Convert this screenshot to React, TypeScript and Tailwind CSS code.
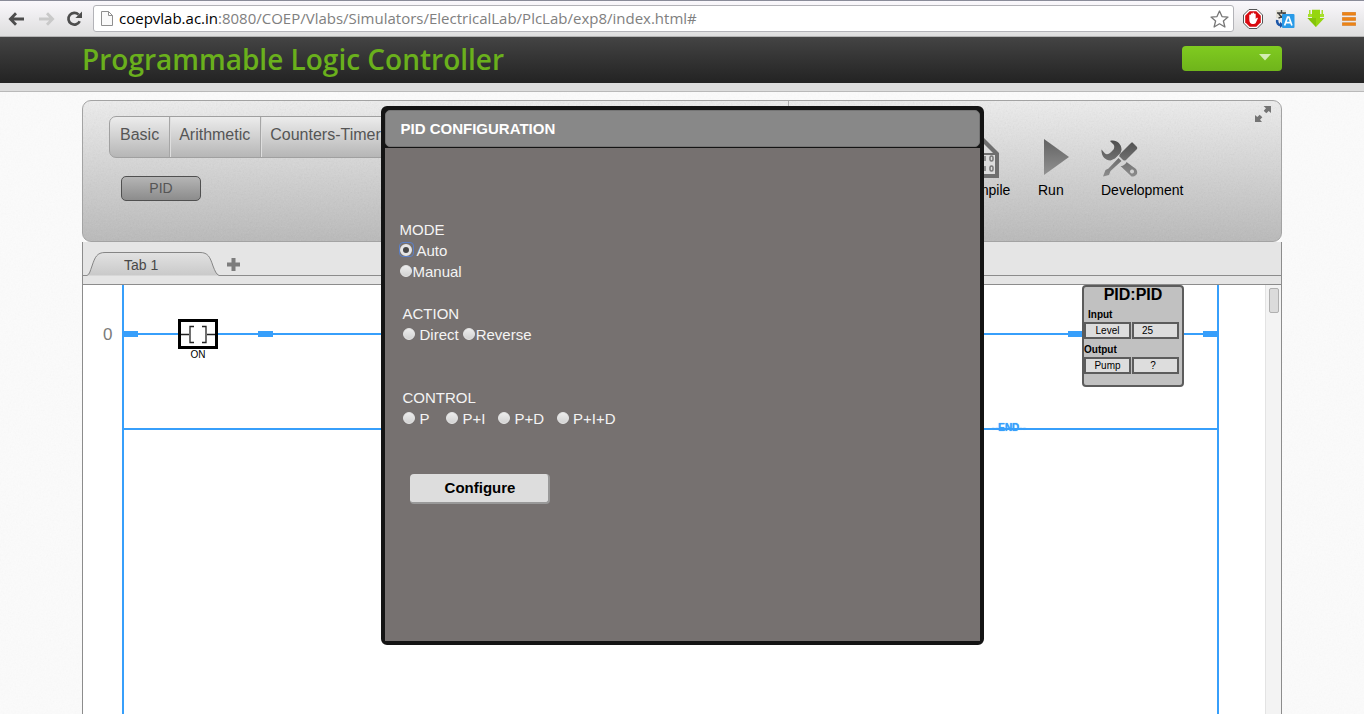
import { useState, type ReactNode } from "react";

function Grain({ id, className }: { id: string; className: string }) {
  return (
    <svg aria-hidden="true" className={`pointer-events-none absolute inset-0 size-full ${className}`}>
      <filter id={id}>
        <feTurbulence type="fractalNoise" baseFrequency="0.6" numOctaves="2" stitchTiles="stitch" />
        <feColorMatrix type="saturate" values="0" />
      </filter>
      <rect width="100%" height="100%" filter={`url(#${id})`} />
    </svg>
  );
}

function BrowserBar() {
  return (
    <div className="flex h-[37px] shrink-0 items-center border-t border-t-[#8a8c99] border-b border-b-[#b4b4b4] bg-linear-to-b from-[#faf8fc] to-[#dedede]">
      <button aria-label="Back" className="ml-2 flex w-[30px] items-center">
        <svg width="17" height="14" viewBox="0 0 17 14" fill="none" stroke="#4d4d4d" strokeWidth="2.8">
          <path d="M8 1.2 2.4 7 8 12.8M2.6 7H16" />
        </svg>
      </button>
      <button aria-label="Forward" className="flex w-[28px] items-center">
        <svg width="17" height="14" viewBox="0 0 17 14" fill="none" stroke="#c9c9c9" strokeWidth="2.8">
          <path d="M9 1.2 14.6 7 9 12.8M14.4 7H1" />
        </svg>
      </button>
      <button aria-label="Reload" className="flex w-[27px] items-center">
        <svg width="17" height="16" viewBox="0 0 17 16">
          <path d="M12.6 3.6A5.9 5.9 0 1 0 13.7 10.2" fill="none" stroke="#4d4d4d" strokeWidth="2.7" />
          <path d="M16 .4V7H9.4Z" fill="#4d4d4d" />
        </svg>
      </button>
      <div className="flex h-[27px] min-w-0 flex-1 items-center rounded-[3px] border border-[#b3b3b8] bg-white pr-1 pl-[7px]">
        <svg width="12" height="15" viewBox="0 0 12 15" fill="#fafafa" stroke="#8f8f8f">
          <path d="M.5.5H7.5L11.5 4.5V14.5H.5ZM7.5.5V4.5H11.5" />
        </svg>
        <p className="ml-[6px] min-w-0 flex-1 truncate pb-[2px] font-['Open_Sans',sans-serif] text-[15px] leading-[22px] text-[#808080]">
          <span className="text-black">coepvlab.ac.in</span>:8080/COEP/Vlabs/Simulators/ElectricalLab/PlcLab/exp8/index.html#
        </p>
        <button aria-label="Bookmark">
          <svg width="19" height="18" viewBox="0 0 19 18" fill="#fff" stroke="#777" strokeWidth="1.3" strokeLinejoin="round">
            <path d="M9.5 1 12 6.6 18 7.1 13.4 11 14.9 17 9.5 13.8 4.1 17 5.6 11 1 7.1 7 6.6Z" />
          </svg>
        </button>
      </div>
      <div className="mr-2 ml-[9px] flex items-center">
        <svg width="20" height="20" viewBox="0 0 20 20">
          <path d="M6 .5H14L19.5 6V14L14 19.5H6L.5 14V6Z" fill="#fff" stroke="#555" />
          <path d="M6.7 2.2H13.3L17.8 6.7V13.3L13.3 17.8H6.7L2.2 13.3V6.7Z" fill="#d9090f" />
          <path d="M6.3 9.5V6.2a.8.8 0 0 1 1.6 0V5a.8.8 0 0 1 1.6 0V4.4a.8.8 0 0 1 1.6 0V5.2a.8.8 0 0 1 1.6 0V10l1.1-1.2c.8-.4 1.3.3.9 1L12.7 14c-.8 1.3-4.6 1.6-5.6-.2-.7-1.2-.8-2.6-.8-4.3Z" fill="#fff" />
        </svg>
        <svg className="ml-3" width="20" height="20" viewBox="0 0 20 20">
          <path d="M1 1H11V9H1Z" fill="#e3e0d6" />
          <path d="M2 4H11M6.5 1V4M3.5 9C6 8.5 8.5 6.5 9.3 4M3.6 4.5C5 7 7 8.5 9.5 9" fill="none" stroke="#3d3d3d" strokeWidth="1.4" />
          <path d="M2.2 11C1.6 14 3.4 16.2 6 16.2" fill="none" stroke="#1c56a8" strokeWidth="2.6" />
          <path d="M5 12.8 8.5 16 5 19Z" fill="#1c56a8" />
          <rect x="7" y="5" width="12.5" height="14" rx="1" fill="#2a9be8" />
          <path d="M9.6 16.5 12.6 8H13.9L16.9 16.5M10.8 13.6H15.8" fill="none" stroke="#fff" strokeWidth="1.7" />
        </svg>
        <svg className="ml-3" width="18" height="19" viewBox="0 0 18 19">
          <path d="M5 .8H13V9H17.5L9 18 .5 9H5Z" fill="#96d60f" />
          <path d="M2 1H3.5V5H5V8H1V5H2ZM14.500 1H16V5H17V8H13V5H14.5Z" fill="#a7df2c" />
          <path d="M9 18 .5 9H9Z" fill="#84c40a" />
        </svg>
        <button aria-label="Browser menu" className="ml-[17px]">
          <svg width="14" height="14" viewBox="0 0 14 14" fill="#ee8416" stroke="#cf6a0c" strokeWidth=".5">
            <path d="M.3.3H13.7V3.2H.3ZM.3 5.500H13.7V8.4H.3ZM.3 10.700H13.7V13.6H.3Z" />
          </svg>
        </button>
      </div>
    </div>
  );
}

function SiteHeader() {
  return (
    <header className="shrink-0 border-b border-[#b9b9b9] bg-[#ddd]">
      <div className="h-[46px] bg-linear-to-b from-[#444] to-[#232323]">
        <div className="mx-auto flex w-full max-w-[1200px] justify-between">
          <h1 className="h-[46px] font-['Open_Sans',sans-serif] text-[28px] leading-[44px] font-semibold whitespace-nowrap text-[#6ab01c]">
            Programmable Logic Controller
          </h1>
          <button
            aria-label="Account menu"
            className="mt-[9px] flex h-[25px] w-[100px] justify-end rounded-[4px] bg-linear-to-b from-[#80cb20] to-[#6fb41b] pt-2 pr-[11px]"
          >
            <svg width="12" height="7" viewBox="0 0 12 7" fill="#d3edb2">
              <path d="M0 0H12L6 6.5Z" />
            </svg>
          </button>
        </div>
      </div>
      <div className="h-2" />
    </header>
  );
}

function ToolItem({ label, children }: { label: string; children: ReactNode }) {
  return (
    <button className="flex flex-col items-start text-[14px] leading-5 text-black">
      <span className="flex h-11 items-center pb-[2px]">{children}</span>
      {label}
    </button>
  );
}

function Ribbon() {
  return (
    <section className="relative flex h-[142px] shrink-0 overflow-hidden rounded-[9px] border border-[#a3a3a3] bg-linear-to-b from-[#eee] to-[#bababa]">
      <Grain id="ribbon-grain" className="opacity-15" />
      <div className="relative w-[705px] shrink-0 pt-[15px] pl-[26px]">
        <nav className="flex h-[42px] w-fit rounded-[7px] border border-[#a0a0a0] bg-linear-to-b from-[#ececec] to-[#b6b6b6] text-[16px] leading-[35px] text-[#555]">
          <a href="#basic" className="border-r border-[#a6a6a6] px-[10px]">Basic</a>
          <a href="#arithmetic" className="border-r border-l border-r-[#a6a6a6] border-l-[#dedede] pr-[10px] pl-2">Arithmetic</a>
          <a href="#counters" className="border-l border-[#dedede] px-2">Counters-Timers</a>
        </nav>
        <button className="mt-[18px] ml-3 h-[25px] w-20 rounded-[5px] border border-[#505050] bg-linear-to-b from-[#b5b5b5] to-[#8c8c8c] text-[14px] leading-[23px] text-[#555]">
          PID
        </button>
      </div>
      <div className="relative grid flex-1 grid-cols-[79px_63px_auto] content-start justify-start border-l border-[#adadad] pt-[35px] pl-[170px]">
        <ToolItem label="Compile">
          <svg className="ml-[2px]" width="38" height="42" viewBox="0 0 38 42">
            <path d="M0 1H22L38 17V42H0Z" fill="#6f6f6f" />
            <path d="M4 5H20L32 17H4Z" fill="#ddd" />
            <path d="M4 19H34V38H4Z" fill="#ddd" />
            <g fill="none" stroke="#777" strokeWidth="1.5">
              <rect x="29" y="20" width="3" height="5" rx="1.5" />
              <rect x="29" y="30" width="3" height="5" rx="1.5" />
              <path d="M24 20V25M24 30V35" />
            </g>
          </svg>
        </ToolItem>
        <ToolItem label="Run">
          <svg className="ml-[6px]" width="25" height="38" viewBox="0 0 25 38">
            <defs>
              <linearGradient id="run-fill" x2="0" y2="1">
                <stop stopColor="#626262" />
                <stop offset="1" stopColor="#929292" />
              </linearGradient>
            </defs>
            <path d="M0 1 25 19 0 37Z" fill="url(#run-fill)" />
          </svg>
        </ToolItem>
        <ToolItem label="Development">
          <svg className="mt-[3px]" width="37" height="37" viewBox="0 0 37 37">
            <defs>
              <linearGradient id="tool-fill" x2="0" y2="37" gradientUnits="userSpaceOnUse">
                <stop stopColor="#4e4e4e" />
                <stop offset="1" stopColor="#8d8d8d" />
              </linearGradient>
            </defs>
            <g fill="url(#tool-fill)">
              <path d="M9 1C15-1 21 4 20.5 10L19.5 13 14 18.5 9.5 20.5C4 20.5 0 16 .5 9.5L4 13.500C5 14.5 7 14.5 9 13L12.5 9.500C13.5 7.500 13.5 5.500 12.5 4.500Z" />
              <path d="M31.500 2.500 36 7Q36.5 8 36 9L25 20Q23.500 21 22 20L18.500 16.500Q18 15 19 14L30 3Q31 2 31.500 2.500Z" />
              <path d="M17.500 18 20.500 21 9.500 31 8 35 2 36.500 4.500 30 7.500 28.500Z" />
              <path fillRule="evenodd" d="M25.500 22 35 29C38 33 35 37 30.500 36.500L19.500 26C21.500 26.500 25 24 25.500 22ZM31 29.500a2 2 0 1 0 .1 0Z" />
            </g>
          </svg>
        </ToolItem>
      </div>
      <button aria-label="Toggle full screen" className="absolute top-[5px] right-[10px]">
        <svg width="16" height="16" viewBox="0 0 16 16" fill="#747474">
          <path d="M8.5 0H16V7L13.700 5 11.300 7.300 8.700 4.700 11 2.300ZM0 9 2.300 11 4.700 8.700 7.300 11.300 5 13.700 7 16H0Z" />
        </svg>
      </button>
    </section>
  );
}

function TabStrip() {
  return (
    <div className="shrink-0 border-x border-[#8c8c8c] bg-[#e5e5e5]">
      <div className="flex h-[34px] items-end">
        <div className="h-px w-[4px] bg-[#8c8c8c]" />
        <button className="relative h-6 w-[132px]">
          <svg className="absolute inset-0" width="132" height="24" viewBox="0 0 132 24">
            <defs>
              <linearGradient id="tab-fill" x2="0" y2="1">
                <stop stopColor="#e2e2e2" />
                <stop offset="1" stopColor="#c9c9c9" />
              </linearGradient>
            </defs>
            <path
              d="M0 23.500C3 22 3 19 5 14C8 5 10 .5 18 .5H113C121 .5 123 5 126 14C128 19 129 22 132 23.500"
              fill="url(#tab-fill)"
              stroke="#858585"
            />
          </svg>
          <span className="absolute top-[4px] left-[37px] text-[14px] leading-[18px] text-[#484848]">Tab 1</span>
        </button>
        <div className="flex h-full flex-1 items-end border-b border-[#8c8c8c] pb-[4px] pl-[8px]">
          <button aria-label="Add tab">
            <svg width="13" height="13" viewBox="0 0 13 13" fill="#7d7d7d">
              <path d="M4.500 0H8.500V4.500H13V8.500H8.500V13H4.500V8.500H0V4.500H4.500Z" />
            </svg>
          </button>
        </div>
      </div>
      <div className="h-[9px] border-b border-[#8c8c8c]" />
    </div>
  );
}

function Cell({ children }: { children: ReactNode }) {
  return (
    <span className="h-[17px] border-2 border-[#5c5c5c] bg-[#ddd] text-center text-[10px] leading-[13px]">
      {children}
    </span>
  );
}

function LadderCanvas() {
  return (
    <main className="relative min-h-0 flex-1 overflow-hidden border-x border-[#8c8c8c] bg-white">
      <div className="absolute top-[40px] left-[20px] text-[17px] leading-5 text-[#7b7b7b]">0</div>
      <div className="absolute inset-y-0 right-[62px] left-[39px] border-x-2 border-[#379ffb]">
        <div className="absolute inset-x-0 top-[48px] h-[2px] bg-[#379ffb]" />
        <div className="absolute inset-x-0 top-[143px] h-[2px] bg-[#379ffb]" />
        <div className="absolute top-[46px] left-0 h-[6px] w-[14px] bg-[#379ffb]" />
        <div className="absolute top-[46px] left-[134px] h-[6px] w-[15px] bg-[#379ffb]" />
        <div className="absolute top-[46px] right-[134px] h-[6px] w-[15px] bg-[#379ffb]" />
        <div className="absolute top-[46px] right-0 h-[6px] w-[14px] bg-[#379ffb]" />
        <button className="absolute top-[34px] left-[54px] flex w-10 flex-col items-center">
          <svg width="40" height="30" viewBox="0 0 40 30">
            <rect x="1.500" y="1.500" width="37" height="27" fill="#fff" stroke="#000" strokeWidth="3" />
            <path d="M3 15.500H11M29 15.500H37M16 7.500H12V23.500H16M24 7.500H28V23.500H24" fill="none" stroke="#222" strokeWidth="1.300" />
          </svg>
          <span className="text-[10px] leading-3 text-black">ON</span>
        </button>
        <div className="absolute top-0 right-[33px] h-[102px] w-[102px] rounded-[4px] border-2 border-[#5c5c5c] bg-[#c1c1c1] text-black">
          <h2 className="h-[17px] text-center text-[16px] leading-4 font-bold">PID:PID</h2>
          <div className="h-[18px] pt-1 pl-1 text-[10px] leading-[14px] font-bold">Input</div>
          <div className="grid grid-cols-[47px_47px] gap-px">
            <Cell>Level</Cell>
            <Cell><span className="pr-4">25</span></Cell>
          </div>
          <div className="h-[18px] pt-1 text-[10px] leading-[14px] font-bold">Output</div>
          <div className="grid grid-cols-[47px_47px] gap-px">
            <Cell>Pump</Cell>
            <Cell><span className="pr-[5px]">?</span></Cell>
          </div>
        </div>
        <div className="absolute top-[137px] right-[191px] text-[10px] leading-3 font-bold text-[#379ffb] [text-shadow:0_0_1px_#379ffb]">
          --END--
        </div>
      </div>
      <div className="absolute inset-y-0 right-0 w-4 border-l border-[#e3e3e3] bg-[#f3f3f3]">
        <div className="mx-auto mt-[3px] h-[25px] w-[10px] rounded-[2px] border border-[#b0b0b0] bg-[#dbdbdb]" />
      </div>
    </main>
  );
}

interface RadioProps {
  name: string;
  label: string;
  spaced?: boolean;
  checked: boolean;
  onSelect: () => void;
}

function Radio({ name, label, spaced = true, checked, onSelect }: RadioProps) {
  return (
    <label className={`flex h-[21px] items-start ${spaced ? "gap-1" : "gap-0"}`}>
      <span
        className={`mt-[3px] flex size-[13px] items-center justify-center ${
          checked ? "rounded-[3px] outline-1 outline-[#5b80c8]" : ""
        }`}
      >
        <input
          type="radio"
          name={name}
          checked={checked}
          onChange={onSelect}
          className={`size-3 appearance-none rounded-full border-[#e6e6e6] outline-none ${
            checked ? "border-[3px] bg-[#484848]" : "border bg-linear-to-b from-[#ececec] to-[#d2d2d2]"
          }`}
        />
      </span>
      <span>{label}</span>
    </label>
  );
}

function PidDialog() {
  const [mode, setMode] = useState("Auto");
  const [action, setAction] = useState("");
  const [control, setControl] = useState("");
  const radio = (name: string, value: string, current: string, set: (v: string) => void, spaced = true) => (
    <Radio name={name} label={value} spaced={spaced} checked={current === value} onSelect={() => set(value)} />
  );

  return (
    <div className="absolute inset-0 flex items-start justify-center pt-[106px]">
      <div role="dialog" aria-labelledby="pid-title" className="w-[603px] rounded-[6px] border-4 border-[#141414] bg-[#141414]">
        <h2
          id="pid-title"
          className="h-[37px] rounded-[5px] border border-[#757575] bg-[#888] pl-[15px] text-[15px] leading-[35px] font-bold text-white"
        >
          PID CONFIGURATION
        </h2>
        <form
          className="mt-px h-[493px] bg-[#767170] pt-[71px] pl-[15px] text-[15px] leading-[21px] text-[#f4f4f4]"
          onSubmit={(event) => event.preventDefault()}
        >
          <fieldset className="h-[84px]">
            <legend>MODE</legend>
            {radio("mode", "Auto", mode, setMode)}
            {radio("mode", "Manual", mode, setMode, false)}
          </fieldset>
          <fieldset className="ml-[3px] h-[84px]">
            <legend>ACTION</legend>
            <div className="flex gap-1">
              {radio("action", "Direct", action, setAction)}
              {radio("action", "Reverse", action, setAction, false)}
            </div>
          </fieldset>
          <fieldset className="ml-[3px] h-[87px]">
            <legend>CONTROL</legend>
            <div className="flex gap-3">
              <div className="pr-1">{radio("control", "P", control, setControl)}</div>
              {radio("control", "P+I", control, setControl)}
              {radio("control", "P+D", control, setControl)}
              {radio("control", "P+I+D", control, setControl)}
            </div>
          </fieldset>
          <button
            type="submit"
            className="ml-[10px] h-[30px] w-[140px] rounded-[4px] border-r-2 border-b-2 border-[#999] bg-[#ddd] pl-[3px] text-[15px] leading-[28px] font-bold text-black"
          >
            Configure
          </button>
        </form>
      </div>
    </div>
  );
}

export default function App() {
  return (
    <div className="relative flex h-screen flex-col overflow-hidden bg-[#fbfbfb] font-['Liberation_Sans',Arial,sans-serif]">
      <BrowserBar />
      <SiteHeader />
      <div className="relative flex min-h-0 flex-1 flex-col pt-2">
        <Grain id="page-grain" className="opacity-5" />
        <div className="relative mx-auto flex min-h-0 w-full max-w-[1200px] flex-1 flex-col">
          <Ribbon />
          <TabStrip />
          <LadderCanvas />
        </div>
      </div>
      <PidDialog />
    </div>
  );
}
